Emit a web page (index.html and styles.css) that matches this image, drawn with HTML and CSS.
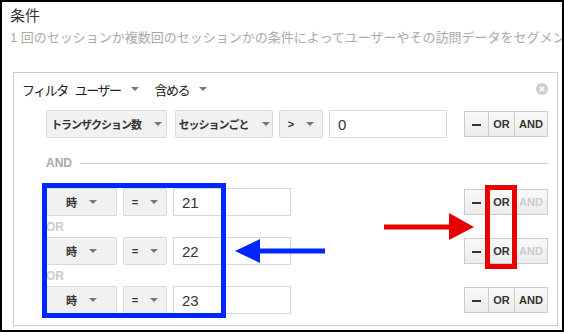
FILE: index.html
```html
<!DOCTYPE html>
<html>
	<head>
		<meta charset="UTF-8">
		<title>条件</title>
		<link rel="stylesheet" href="styles.css">
	</head>
	<body>
		<div class="frame">
			<h1 class="title">条件</h1>
			<p class="lead">1 回のセッションか複数回のセッションかの条件によってユーザーやその訪問データをセグメント化します。</p>
			<div class="panel">
				<div class="panelHead">
					<span class="label">フィルタ</span>
					<span class="drop">ユーザー<i class="caret"></i></span>
					<span class="drop">含める<i class="caret"></i></span>
					<span class="close">
						<svg width="12" height="12" viewBox="0 0 12 12"><circle cx="6" cy="6" r="6" fill="#cfcfcf"/><path d="M3.8 3.8 L8.2 8.2 M8.2 3.8 L3.8 8.2" stroke="#fff" stroke-width="1.6"/></svg>
					</span>
				</div>

				<div class="cond first">
					<div class="sel w121">トランザクション数<i class="caret"></i></div>
					<div class="sel w98">セッションごと<i class="caret"></i></div>
					<div class="sel w44">&gt;<i class="caret"></i></div>
					<div class="inp">0</div>
					<div class="btns">
						<div class="btn minus"><b></b></div>
						<div class="btn or">OR</div>
						<div class="btn and">AND</div>
					</div>
				</div>

				<div class="divider">AND</div>

				<div class="cond second">
					<div class="sel w71">時<i class="caret"></i></div>
					<div class="sel w44">=<i class="caret"></i></div>
					<div class="inp">21</div>
					<div class="btns">
						<div class="btn minus"><b></b></div>
						<div class="btn or">OR</div>
						<div class="btn and off">AND</div>
					</div>
				</div>
				<div class="orLabel">OR</div>
				<div class="cond">
					<div class="sel w71">時<i class="caret"></i></div>
					<div class="sel w44">=<i class="caret"></i></div>
					<div class="inp">22</div>
					<div class="btns">
						<div class="btn minus"><b></b></div>
						<div class="btn or">OR</div>
						<div class="btn and off">AND</div>
					</div>
				</div>
				<div class="orLabel">OR</div>
				<div class="cond">
					<div class="sel w71">時<i class="caret"></i></div>
					<div class="sel w44">=<i class="caret"></i></div>
					<div class="inp">23</div>
					<div class="btns">
						<div class="btn minus"><b></b></div>
						<div class="btn or">OR</div>
						<div class="btn and">AND</div>
					</div>
				</div>
			</div>
		</div>

		<!-- annotations drawn over the screenshot -->
		<svg class="marks" width="564" height="332" viewBox="0 0 564 332">
			<rect x="44.5" y="185.5" width="179" height="130" fill="none" stroke="#0026ff" stroke-width="5"/>
			<rect x="487.5" y="187.5" width="27" height="79" fill="none" stroke="#e80000" stroke-width="5"/>
			<path d="M384 227 H452" stroke="#e80000" stroke-width="5"/>
			<polygon points="449,213 474,227 449,240" fill="#e80000"/>
			<path d="M256 251 H325" stroke="#0026ff" stroke-width="5"/>
			<polygon points="260,239 235,251 260,263" fill="#0026ff"/>
		</svg>
	</body>
</html>
```

FILE: styles.css
```css
body{
	margin: 0;
	position: relative;
	font-family: "Liberation Sans", "Noto Sans CJK JP", sans-serif;
	color: #333;
}
.frame{
	width: 564px;
	height: 332px;
	box-sizing: border-box;
	border: 2px solid #000;
	overflow: hidden;
	background-color: #fff;
}
.title{
	margin: 0;
	padding: 4px 0 0 8px;
	font-size: 15px;
	font-weight: normal;
	line-height: 20px;
	color: #333;
}
.lead{
	margin: 3px 0 0;
	padding-left: 8px;
	font-size: 13px;
	line-height: 18px;
	color: #aaa;
	white-space: nowrap;
}
.panel{
	margin: 25px 0 0 11px;
	width: 545px;
	box-sizing: border-box;
	border: 1px solid #ccc;
	padding: 6px 9px 11px 8px;
}
.panelHead{
	display: flex;
	align-items: center;
	height: 20px;
	font-size: 13px;
	letter-spacing: -1.5px;
	color: #222;
}
.panelHead .label{
	margin-right: 7px;
}
.panelHead .drop{
	display: flex;
	align-items: center;
	gap: 10px;
	margin-right: 16px;
}
.panelHead .close{
	margin-left: auto;
	display: flex;
}
.caret{
	display: block;
	width: 0;
	height: 0;
	border-left: 4px solid transparent;
	border-right: 4px solid transparent;
	border-top: 4px solid #777;
}
.cond{
	display: flex;
	align-items: center;
	height: 28px;
	margin-left: 24px;
	margin-top: 4px;
}
.cond.first{
	margin-top: 11px;
}
.cond.second{
	margin-top: 18px;
}
.sel{
	height: 28px;
	box-sizing: border-box;
	border: 1px solid #dadada;
	border-radius: 2px;
	background-color: #f1f1f1;
	display: flex;
	align-items: center;
	justify-content: center;
	gap: 13px;
	font-size: 11px;
	font-weight: bold;
	letter-spacing: -1px;
	color: #333;
	margin-right: 6px;
}
.w121{ width: 121px; margin-right: 8px; }
.w98{ width: 98px; }
.w44{ width: 44px; }
.w71{ width: 71px; }
.inp{
	width: 118px;
	height: 28px;
	box-sizing: border-box;
	border: 1px solid #d8d8d8;
	padding-left: 8px;
	display: flex;
	align-items: center;
	font-size: 15px;
	color: #333;
}
.btns{
	margin-left: auto;
	display: flex;
	height: 26px;
}
.btn{
	box-sizing: border-box;
	height: 26px;
	border: 1px solid #ccc;
	background: linear-gradient(#f9f9f9, #ececec);
	display: flex;
	align-items: center;
	justify-content: center;
	font-size: 11px;
	font-weight: bold;
	color: #333;
}
.btn + .btn{
	margin-left: -1px;
}
.btn.minus{ width: 25px; }
.btn.or{ width: 27px; }
.btn.and{ width: 34px; }
.btn.off{ color: #ccc; }
.btn.minus b{
	display: block;
	width: 9px;
	height: 2px;
	background-color: #333;
	margin-top: 2px;
}
.divider{
	display: flex;
	align-items: center;
	height: 14px;
	margin: 18px 0 0 24px;
	font-size: 12px;
	font-weight: bold;
	color: #aaa;
}
.divider::after{
	content: "";
	flex: 1;
	height: 1px;
	background-color: #ccc;
	margin-left: 8px;
}
.orLabel{
	height: 12px;
	line-height: 12px;
	margin: 5px 0 0 24px;
	font-size: 12px;
	font-weight: bold;
	color: #ccc;
}
.marks{
	position: absolute;
	top: 0;
	left: 0;
}
```
